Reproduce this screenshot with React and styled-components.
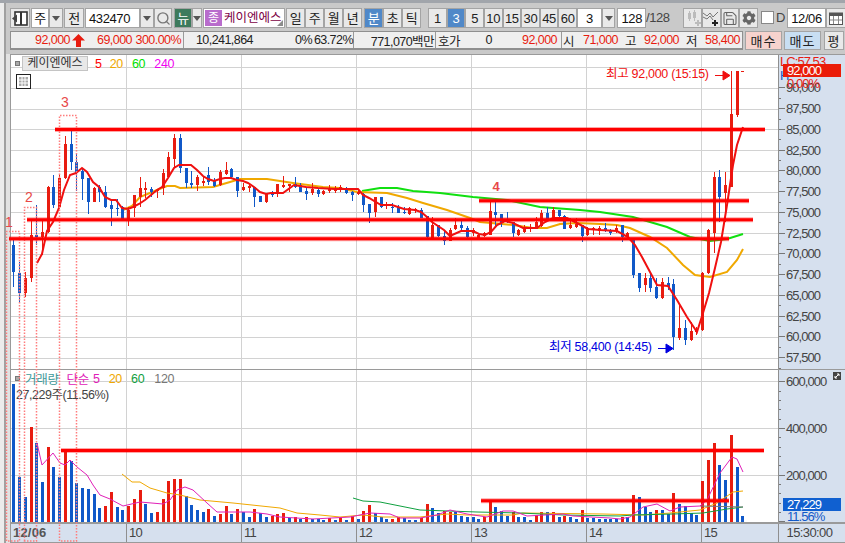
import React from 'react';
import styled, { createGlobalStyle } from 'styled-components';
import { Save, Search } from 'lucide-react';
import { FaCog } from 'react-icons/fa';

const GlobalStyle = createGlobalStyle`
  html, body { margin: 0; padding: 0; background: #c9c9c9; }
  body {
    font-family: "Liberation Sans", "Noto Sans CJK KR", sans-serif;
    font-size: 13px;
    color: #222;
  }
`;

const RED = '#e81c10';
const BLUE = '#1058c8';

// color, body top, body bottom, wick top, wick bottom (page y)
const candles = [
  ['b',245,272,239,287],['b',273,293,262,303],['r',278,293,272,297],['r',235,278,220,282],['b',235,237,205,245],
  ['r',232,237,220,255],['r',187,232,186,233],['b',187,205,175,208],['r',178,207,174,207],['r',144,178,136,179],
  ['b',144,162,130,170],['b',162,173,154,191],['b',171,179,168,200],['b',178,202,178,214],['r',188,202,187,202],
  ['b',187,192,185,202],['b',192,207,186,208],['b',205,209,199,226],['b',208,209,199,216],['b',207,219,206,219],
  ['r',210,221,207,226],['r',195,208,195,217],['r',188,197,177,207],['r',188,190,182,198],['b',189,192,187,197],
  ['r',190,191,189,198],['r',173,188,169,195],['r',157,177,152,177],['r',138,159,134,168],['b',138,168,134,173],
  ['b',168,183,168,188],['b',183,185,171,188],['r',177,185,175,191],['r',181,183,177,186],['b',175,182,167,185],
  ['b',180,186,178,187],['r',172,185,170,186],['r',170,174,162,175],['b',169,177,168,178],['b',177,191,177,197],
  ['r',187,190,183,191],['r',186,188,183,192],['b',187,197,187,207],['b',196,202,196,202],['r',193,202,193,203],
  ['b',193,195,191,197],['r',184,193,184,197],['r',185,187,176,188],['r',184,186,184,192],['b',184,187,177,188],
  ['b',185,192,183,192],['b',191,194,187,200],['r',189,193,183,195],['b',190,194,188,197],['r',191,194,190,195],
  ['r',189,191,185,193],['r',188,191,186,193],['r',187,190,185,192],['b',188,193,187,194],['b',192,195,191,201],
  ['r',192,194,189,195],['b',194,205,193,212],['b',204,213,204,223],['r',197,212,197,217],['b',197,207,197,208],
  ['r',205,206,202,209],['b',207,208,203,213],['b',207,213,205,213],['b',212,213,207,214],['r',208,214,207,215],
  ['r',209,211,208,213],['b',210,218,208,218],['b',216,237,216,238],['r',225,238,217,238],['b',225,236,225,237],
  ['b',236,241,230,245],['r',230,241,228,241],['r',225,229,218,230],['b',225,228,221,232],['b',228,237,226,238],
  ['r',230,233,228,236],['r',235,239,233,240],['r',233,236,232,237],['r',211,235,202,235],['b',212,215,202,227],
  ['b',214,223,214,227],['b',220,221,212,223],['b',222,233,222,237],['r',230,235,229,236],['r',228,232,225,233],
  ['r',227,229,224,232],['r',222,229,217,229],['r',213,226,210,227],['b',213,220,207,220],['r',210,220,207,220],
  ['b',210,216,210,218],['b',216,229,215,229],['r',225,228,218,229],['r',224,227,218,228],['b',225,236,225,242],
  ['r',228,235,227,236],['r',228,230,227,235],['r',228,231,226,235],['b',228,231,223,232],['b',230,233,229,235],
  ['r',228,231,225,233],['b',225,237,225,242],['r',233,237,232,240],['b',239,275,239,278],['b',273,288,273,292],
  ['r',278,285,273,292],['b',278,288,272,292],['b',287,298,278,299],['r',282,298,278,299],['b',283,287,277,290],
  ['b',284,337,279,350],['r',328,338,305,340],['b',328,340,320,345],['r',331,340,322,341],['r',330,332,327,335],
  ['r',273,330,272,331],['r',230,273,229,274],['r',177,233,172,253],['b',177,197,170,222],['r',185,193,172,222],
  ['r',114,187,71,187],['r',71,115,71,117],['r',71,72,71,72],
];

// top of each volume bar, negative = blue
const volumes = [
  -384,-477,-497,427,-443,-482,447,-467,-477,451,
  -461,-483,-488,-489,-494,-508,506,492,-507,-510,
  506,499,490,-504,-513,512,499,481,479,479,
  -496,-505,-510,-512,509,-516,514,506,-514,509,
  -512,-517,509,-513,-517,516,514,
  513,-518,517,-519,517,-519,-519,-520,518,-520,
  518,-520,516,-519,511,505,-513,-517,-519,519,
  517,-518,-520,-520,518,504,-508,-513,511,512,
  -512,-516,-517,-517,-519,517,502,-507,-511,-516,
  512,-517,-517,-520,515,512,-512,512,-517,516,
  -517,-519,510,-518,-518,-519,-519,
  -519,-519,517,-517,495,-497,-507,-512,510,-510,-514,
  493,-504,-506,-513,-515,481,460,443,-465,-480,435,-467,-516,
];

const ma5 = '37,263 42,254 47,231 53,222 59,208 64,190 70,175 76,173 82,168 87,172 93,182 99,187 105,197 111,200 116,200 122,208 128,209 133,207 139,204 145,200 151,195 157,190 162,187 168,178 174,168 179,165 185,165 191,165 197,170 203,176 208,179 214,181 220,179 225,178 231,178 237,180 243,181 248,183 254,187 260,192 266,194 271,193 283,193 294,185 306,187 318,188 335,189 358,189 363,195 369,198 381,205 392,205 404,209 415,210 421,212 427,217 432,222 444,230 450,236 461,231 473,231 479,234 485,235 491,232 497,225 505,221 513,223 523,228 537,228 545,222 553,218 567,218 577,223 588,229 600,230 617,231 628,237 635,245 642,257 650,272 657,285 668,286 677,300 687,317 697,332 703,313 709,293 715,268 721,242 727,205 733,165 737,145 743,127';
const ma20 = '123,210 132,206 140,197 157,190 167,186 175,186 180,188 213,187 230,182 240,179 267,179 280,181 293,183 323,187 340,188 357,192 387,193 407,198 423,203 447,210 470,218 480,222 513,225 533,228 547,228 560,224 577,223 600,224 617,225 630,228 650,237 667,248 683,265 695,275 710,277 727,272 737,260 743,249';
const ma60 = '362,191 380,188 397,188 413,191 440,193 473,197 507,200 540,207 580,210 600,212 633,217 667,227 690,237 710,241 727,239 743,234';

const volMa5 = '37,443 42,465 53,453 60,463 65,465 70,460 77,467 87,475 93,485 100,495 110,499 123,506 140,502 163,504 170,500 177,490 185,487 193,490 207,503 217,512 250,512 267,514 280,517 313,519 350,517 370,513 390,514 400,518 420,518 437,515 450,510 467,514 487,517 503,511 513,511 527,516 563,514 573,516 610,518 620,519 630,517 643,507 657,504 670,511 680,507 700,506 707,500 720,473 732,457 737,459 743,472';
const volMa20 = '122,474 132,482 140,482 150,488 167,493 180,495 200,500 233,503 280,508 297,513 320,515 340,517 363,515 383,517 420,517 447,514 467,515 513,515 523,513 603,514 643,515 670,513 700,510 717,503 733,492 743,491';
const volMa60 = '353,498 363,501 380,502 420,510 477,512 520,513 563,515 620,516 633,515 673,514 703,513 727,509 743,507';
const volMa120 = '700,506 743,507';

const priceTicks = [90000, 87500, 85000, 82500, 80000, 77500, 75000, 72500, 70000, 67500, 65000, 62500, 60000, 57500];
const priceY = (p) => 129.4 + (85000 - p) * 0.0083;
const barX = (i) => 13.3 + 5.74 * i;
const dayLines = [126.5, 241.5, 356.5, 471.5, 586.5, 701.5];
const fmt = (n) => n.toLocaleString('en-US');

const Page = styled.div`
  position: relative;
  width: 845px;
  height: 543px;
  display: flex;
  overflow: hidden;
  border-top: 3px solid #a1a5ab;
  box-sizing: border-box;
`;

const LeftRail = styled.div`
  width: 4px;
  flex: none;
  background: #ececec;
  border-right: 2px solid #a0a0a0;
`;

const Main = styled.div`
  flex: 1;
  min-width: 0;
  display: flex;
  flex-direction: column;
  padding: 5px 0 0 4px;
  background: #c9c9c9;
`;

const Toolbar = styled.div`
  display: flex;
  height: 20px;
`;

const Button = styled.div`
  box-sizing: border-box;
  flex: none;
  width: ${(p) => p.$w}px;
  margin-left: ${(p) => p.$ml || 0}px;
  height: 20px;
  display: flex;
  align-items: center;
  justify-content: center;
  background: ${(p) => (p.$active ? '#5088c8' : '#e9e9e9')};
  color: ${(p) => (p.$active ? '#fff' : '#222')};
  border: 1px solid #a4a4a4;
  font-size: 13px;
  letter-spacing: -0.4px;
  line-height: 1;
`;

const Field = styled(Button)`
  background: #fff;
  justify-content: ${(p) => p.$align || 'center'};
  padding: 0 3px;
  font-size: 13px;
  color: #111;
`;

const Badge = styled(Button)`
  background: #3d7a5c;
  color: #fff;
  border-color: #a4a4a4;
`;

const NameField = styled(Button)`
  position: relative;
  justify-content: flex-start;
  background: #fff;
  color: #7c0044;
  font-size: 12.5px;
  letter-spacing: 0;
  padding: 0;
  gap: 2px;
`;

const NameTag = styled.span`
  width: 17px;
  height: 16px;
  margin-left: 1px;
  background: #b86ccc;
  color: #fff;
  display: flex;
  align-items: center;
  justify-content: center;
  font-size: 12px;
`;

const Corner = styled.span`
  position: absolute;
  right: 1px;
  bottom: 1px;
  width: 0;
  height: 0;
  border-left: 6px solid transparent;
  border-bottom: 6px solid #8c8c8c;
`;

const Caret = styled.span`
  width: 0;
  height: 0;
  border-left: 4px solid transparent;
  border-right: 4px solid transparent;
  border-top: 5px solid #555;
`;

const PlainText = styled.span`
  flex: none;
  width: ${(p) => p.$w}px;
  margin-left: ${(p) => p.$ml || 0}px;
  height: 20px;
  line-height: 20px;
  color: #444;
  font-size: 13px;
  letter-spacing: -0.4px;
`;

const CheckBox = styled.span`
  flex: none;
  box-sizing: border-box;
  width: 13px;
  height: 13px;
  margin: 3px 0 0 3px;
  background: #fff;
  border: 1px solid #888;
`;

const InfoRow = styled.div`
  display: flex;
  height: 19px;
  margin-top: 3px;
`;

const InfoBar = styled.div`
  box-sizing: border-box;
  width: 733px;
  flex: none;
  display: flex;
  background: #efefef;
  border: 1px solid #8f8f8f;
  border-bottom-width: 2px;
`;

const InfoCell = styled.div`
  box-sizing: border-box;
  width: ${(p) => p.$w}px;
  flex: none;
  display: flex;
  align-items: center;
  padding-left: ${(p) => p.$pad || 0}px;
  border-right: ${(p) => (p.$last ? 'none' : '1px solid #9a9a9a')};
`;

const Value = styled.span`
  flex: none;
  width: ${(p) => p.$w}px;
  text-align: ${(p) => p.$align || 'right'};
  color: ${(p) => p.$color || '#222'};
  font-size: 12.5px;
  letter-spacing: -0.55px;
  white-space: nowrap;
`;

const UpArrow = styled.svg`
  flex: none;
  width: 13px;
  height: 13px;
  margin-left: 2px;
`;

const TradeButton = styled.div`
  box-sizing: border-box;
  flex: none;
  width: ${(p) => p.$w}px;
  margin-left: ${(p) => p.$ml}px;
  display: flex;
  align-items: center;
  justify-content: center;
  background: ${(p) => p.$bg};
  border: 1px solid #a4a4a4;
  font-size: 13px;
  letter-spacing: 1px;
  color: #222;
`;

const ChartFrame = styled.div`
  flex: 1;
  margin: 4px 0 0 -4px;
  padding-left: 4px;
  background: #e2e2e2;
  display: flex;
  flex-direction: column;
`;

const PanelRow = styled.div`
  position: relative;
  display: flex;
  height: ${(p) => p.$h}px;
  flex: none;
  border-top: 1px solid #9a9a9a;
  border-left: 1px solid #9a9a9a;
  background: #fff;
`;

const Plot = styled.svg`
  display: block;
  width: 767px;
  height: 100%;
  flex: none;
`;

const Axis = styled.svg`
  display: block;
  flex: none;
  width: 67px;
  height: 100%;
  background: #d6e0ee;
  border-left: 1px solid #8f8f8f;
  box-sizing: border-box;
`;

const AxisLabel = styled.text`
  font-size: 13px;
  letter-spacing: -0.95px;
  fill: ${(p) => p.$color || '#444'};
  dominant-baseline: central;
`;

const Note = styled.text`
  font-size: 12.5px;
  letter-spacing: -0.3px;
  fill: ${(p) => p.$color};
  dominant-baseline: central;
`;

const Legend = styled.div`
  position: absolute;
  left: 4px;
  top: ${(p) => p.$top}px;
  display: flex;
  align-items: center;
  height: 15px;
  font-size: 12.5px;
  letter-spacing: -0.3px;
  white-space: nowrap;
`;

const LegendDot = styled.span`
  width: 5px;
  height: 5px;
  background: #aaa;
  border: 1px solid #777;
  box-sizing: border-box;
  margin-right: ${(p) => p.$gap}px;
`;

const LegendName = styled.span`
  box-sizing: border-box;
  width: 66px;
  height: 15px;
  background: #e8e8e8;
  border: 1px solid #c4c4c4;
  color: #333;
  font-size: 12px;
  letter-spacing: 0;
  line-height: 13px;
  text-align: center;
`;

const LegendItem = styled.span`
  color: ${(p) => p.$color};
  margin-left: ${(p) => p.$ml}px;
`;

const VolumeInfo = styled.div`
  position: absolute;
  left: 5px;
  top: 14px;
  font-size: 12.5px;
  letter-spacing: -0.45px;
  color: #444;
`;

const TableIcon = styled.svg`
  position: absolute;
  left: 5px;
  top: 19px;
  width: 15px;
  height: 15px;
`;

const ExpandIcon = styled.svg`
  position: absolute;
  right: 4px;
  top: 2px;
  width: 8px;
  height: 8px;
`;

const TimeRow = styled.div`
  display: flex;
  height: 18px;
  flex: none;
  background: #d6e0ee;
  border-top: 2px solid #9a9a9a;
  border-left: 1px solid #9a9a9a;
  border-bottom: 1px solid #9a9a9a;
`;

const TimeCell = styled.div`
  box-sizing: border-box;
  flex: none;
  width: ${(p) => p.$w}px;
  padding-left: ${(p) => p.$pad || 2}px;
  border-right: 1px solid #8f8f8f;
  font-size: 13px;
  line-height: 18px;
  letter-spacing: ${(p) => (p.$bold ? '0.2px' : '-0.7px')};
  font-weight: ${(p) => (p.$bold ? 700 : 400)};
  color: ${(p) => (p.$bold ? '#555' : '#444')};
`;

const TimeEnd = styled(TimeCell)`
  flex: 1;
  border-right: none;
  padding-left: 8px;
  letter-spacing: -0.6px;
`;

const Annotations = styled.svg`
  position: absolute;
  left: 0;
  top: -3px;
  width: 845px;
  height: 543px;
  pointer-events: none;
`;

const StepLabel = styled.text`
  font-size: ${(p) => p.$size || 14}px;
  font-weight: ${(p) => p.$weight || 400};
  fill: #e84848;
  text-anchor: middle;
`;

const DropButton = ({ w }) => (
  <Button $w={w}>
    <Caret />
  </Button>
);

const PanelIcon = () => (
  <svg width="16" height="15" viewBox="0 0 16 15">
    <rect x="3" y="1" width="12" height="13" fill="#fff" stroke="#333" strokeWidth="1.6" />
    <rect x="8" y="1" width="2" height="13" fill="#333" />
    <path d="M0 7.5 L5 3.5 V11.5 Z" fill="#444" />
  </svg>
);

const CandleAddIcon = () => (
  <svg width="16" height="16" viewBox="0 0 16 16" fill="#bcbcbc">
    <rect x="3" y="3" width="3" height="6" />
    <rect x="4" y="1" width="1" height="10" />
    <rect x="8" y="2" width="3" height="6" />
    <rect x="9" y="0" width="1" height="11" />
    <path d="M12 10h2v2h2v2h-2v2h-2v-2h-2v-2h2z" />
  </svg>
);

const LineAddIcon = () => (
  <svg width="17" height="16" viewBox="0 0 17 16">
    <path d="M0 3 L4 6 L7 3 L10 7 L15 2 M0 7 L4 9 L7 6 L10 10" fill="none" stroke="#777" strokeWidth="1" />
    <path d="M11 10h2v2h2v2h-2v2h-2v-2h-2v-2h2z" fill="#222" />
  </svg>
);

const CalendarIcon = () => (
  <svg width="14" height="13" viewBox="0 0 14 13">
    <rect x="0.5" y="1" width="13" height="11.5" fill="#fff" stroke="#555" />
    <rect x="0.5" y="1" width="13" height="3" fill="#555" />
    <path d="M4.5 4v8M9.5 4v8M1 8h12" stroke="#888" />
  </svg>
);

const Candles = () => (
  <g shapeRendering="crispEdges">
    {candles.map(([c, top, bot, wt, wb], i) => {
      const x = Math.round(barX(i));
      const fill = c === 'r' ? RED : BLUE;
      return (
        <g key={i} fill={fill}>
          <rect x={x} y={wt} width="1" height={wb - wt} />
          <rect x={x - 1} y={top} width="3" height={Math.max(bot - top, 1)} />
        </g>
      );
    })}
  </g>
);

const VolumeBars = () => (
  <g shapeRendering="crispEdges">
    {volumes.map((v, i) => {
      const top = Math.abs(v);
      return (
        <rect key={i} x={Math.round(barX(i)) - 1} y={top} width="3" height={522 - top} fill={v < 0 ? BLUE : RED} />
      );
    })}
  </g>
);

const Trend = ({ pts, color, w }) => <polyline points={pts} fill="none" stroke={color} strokeWidth={w} />;

const GridLines = ({ ys, y1, y2 }) => (
  <g stroke="#d2d2d2" strokeWidth="1" shapeRendering="crispEdges">
    {ys.map((y) => <line key={y} x1="11" x2="778" y1={y} y2={y} />)}
    {dayLines.map((x) => <line key={x} x1={x} x2={x} y1={y1} y2={y2} />)}
  </g>
);

const PriceAxis = () => (
  <Axis viewBox="779 55 66 314">
    <g stroke="#777" shapeRendering="crispEdges">
      {priceTicks.map((p) => (
        <g key={p}>
          <line x1="778" x2="785" y1={priceY(p)} y2={priceY(p)} />
          <line x1="778" x2="781" y1={priceY(p) + 10.4} y2={priceY(p) + 10.4} />
        </g>
      ))}
    </g>
    {priceTicks.map((p) => <AxisLabel key={p} x="786" y={priceY(p)}>{fmt(p)}</AxisLabel>)}
    <AxisLabel x="780" y="61" $color="#e81c10">LC:57.53</AxisLabel>
    <AxisLabel x="780" y="75" $color="#1058c8">H</AxisLabel>
    <rect x="783" y="64" width="58" height="13" fill="#ea1c08" />
    <AxisLabel x="787" y="70.5" $color="#fff">92,000</AxisLabel>
    <AxisLabel x="787" y="83" $color="#e81c10">0.00%</AxisLabel>
  </Axis>
);

const VolumeAxis = () => (
  <Axis viewBox="779 370 66 152">
    <g stroke="#777" shapeRendering="crispEdges">
      {[0, 1, 2, 3, 4, 5, 6, 7, 8, 9, 10, 11, 12, 13, 14, 15].map((k) => {
        const y = 521.7 - k * 9.33;
        return <line key={k} x1="778" x2={k % 5 === 0 ? 785 : 781} y1={y} y2={y} />;
      })}
    </g>
    {[600000, 400000, 200000].map((v) => (
      <AxisLabel key={v} x="786" y={521.7 - v * 0.00023333}>{fmt(v)}</AxisLabel>
    ))}
    <rect x="783" y="498" width="58" height="13" fill="#1060d0" />
    <AxisLabel x="787" y="504.5" $color="#fff">27,229</AxisLabel>
    <AxisLabel x="787" y="516.5" $color="#1058c8">11.56%</AxisLabel>
  </Axis>
);

export default function App() {
  return (
    <>
      <GlobalStyle />
      <Page>
        <LeftRail />
        <Main>
          <Toolbar>
            <Button $w={20}><PanelIcon /></Button>
            <Field $w={18} $ml={1}>주</Field>
            <DropButton w={14} />
            <Button $w={20} $ml={1}>전</Button>
            <Field $w={55} $ml={1} $align="flex-start">432470</Field>
            <DropButton w={14} />
            <Button $w={18}><Search size={15} color="#777" strokeWidth={2.2} /></Button>
            <Badge $w={18} $ml={2}>뉴</Badge>
            <Button $w={10}><Caret /></Button>
            <NameField $w={82} $ml={1}>
              <NameTag>종</NameTag>
              케이엔에스
              <Corner />
            </NameField>
            {['일', '주', '월', '년'].map((t, i) => <Button key={t} $w={19} $ml={i === 0 ? 1 : 0}>{t}</Button>)}
            <Button $w={19} $ml={2} $active>분</Button>
            <Button $w={19}>초</Button>
            <Button $w={19}>틱</Button>
            {['1', '3', '5', '10', '15', '30', '45', '60'].map((t, i) => (
              <Button key={t} $w={18.625} $ml={i === 0 ? 7 : 0} $active={t === '3'}>{t}</Button>
            ))}
            <Field $w={25}>3</Field>
            <DropButton w={13} />
            <Field $w={29} $ml={2} $align="flex-end">128</Field>
            <PlainText $w={26}>/128</PlainText>
            <Button $w={19} $ml={11}><CandleAddIcon /></Button>
            <Button $w={19}><LineAddIcon /></Button>
            <Button $w={18}><Save size={17} color="#666" strokeWidth={1.6} /></Button>
            <Button $w={19}><FaCog size={14} color="#666" /></Button>
            <CheckBox />
            <PlainText $w={11} $ml={2}>D</PlainText>
            <Field $w={39}>12/06</Field>
            <Button $w={20}><CalendarIcon /></Button>
          </Toolbar>

          <InfoRow>
            <InfoBar>
              <InfoCell $w={173}>
                <Value $w={59} $color={RED}>92,000</Value>
                <UpArrow viewBox="0 0 13 13"><path d="M6.5 0 L13 6.5 H9 V13 H4 V6.5 H0 Z" fill={RED} /></UpArrow>
                <Value $w={47} $color={RED}>69,000</Value>
                <Value $w={49} $color={RED}>300.00%</Value>
              </InfoCell>
              <InfoCell $w={170}>
                <Value $w={69}>10,241,864</Value>
                <Value $w={59}>0%</Value>
                <Value $w={41}>63.72%</Value>
              </InfoCell>
              <InfoCell $w={82}>
                <Value $w={80}>771,070백만</Value>
              </InfoCell>
              <InfoCell $w={126} $pad={2}>
                <Value $w={22} $align="left">호가</Value>
                <Value $w={32}>0</Value>
                <Value $w={65} $color={RED}>92,000</Value>
              </InfoCell>
              <InfoCell $w={181} $pad={1} $last>
                <Value $w={11} $align="left">시</Value>
                <Value $w={44} $color={RED}>71,000</Value>
                <Value $w={18}>고</Value>
                <Value $w={43} $color={RED}>92,000</Value>
                <Value $w={18}>저</Value>
                <Value $w={43} $color={RED}>58,400</Value>
              </InfoCell>
            </InfoBar>
            <TradeButton $w={37} $ml={2} $bg="#f6d2cd">매수</TradeButton>
            <TradeButton $w={37} $ml={2} $bg="#c8def2">매도</TradeButton>
            <TradeButton $w={20} $ml={3} $bg="#e9e9e9">평</TradeButton>
          </InfoRow>

          <ChartFrame>
            <PanelRow $h={314}>
              <Plot viewBox="11 55 767 314">
                <GridLines ys={[92500, ...priceTicks].map((p) => Math.round(priceY(p)) + 0.5)} y1={55} y2={369} />
                <Trend pts={ma60} color="#10e010" w={2} />
                <Trend pts={ma20} color="#f0a800" w={2} />
                <Candles />
                <Trend pts={ma5} color="#f01010" w={2} />
                <Note x="606" y="74" $color="#f01010">최고 92,000 (15:15)</Note>
                <path d="M715 75.5 H724 M723 71 L730 75.5 L723 80 Z" fill="#f01010" stroke="#f01010" />
                <Note x="549" y="347" $color="#0000e0">최저 58,400 (14:45)</Note>
                <path d="M658 348.5 H667 M666 344 L673 348.5 L666 353 Z" fill="#0000e0" stroke="#0000e0" />
              </Plot>
              <PriceAxis />
              <Legend $top={1}>
                <LegendDot $gap={2} />
                <LegendName>케이엔에스</LegendName>
                <LegendItem $color="#ff0000" $ml={7}>5</LegendItem>
                <LegendItem $color="#f0a800" $ml={8}>20</LegendItem>
                <LegendItem $color="#00e000" $ml={9}>60</LegendItem>
                <LegendItem $color="#f000f0" $ml={9}>240</LegendItem>
              </Legend>
              <TableIcon viewBox="0 0 15 15">
                <rect x="0.5" y="0.5" width="14" height="14" fill="#fff" stroke="#222" />
                <rect x="3" y="3" width="9" height="9" fill="#aaa" />
                <path d="M6 3v9M9 3v9M3 6h9M3 9h9" stroke="#fff" />
              </TableIcon>
            </PanelRow>

            <PanelRow $h={152}>
              <Plot viewBox="11 370 767 152">
                <GridLines ys={[381.5, 428.5, 475.5]} y1={370} y2={522} />
                <VolumeBars />
                <Trend pts={volMa20} color="#f0a800" w={1} />
                <Trend pts={volMa60} color="#10a040" w={1} />
                <Trend pts={volMa120} color="#777" w={1} />
                <Trend pts={volMa5} color="#e020b8" w={1} />
              </Plot>
              <VolumeAxis />
              <Legend $top={1}>
                <LegendDot $gap={5} />
                <LegendItem $color="#3f9a9a" $ml={0}>거래량</LegendItem>
                <LegendItem $color="#e020b8" $ml={8}>단순</LegendItem>
                <LegendItem $color="#e020b8" $ml={4}>5</LegendItem>
                <LegendItem $color="#f0a800" $ml={9}>20</LegendItem>
                <LegendItem $color="#10a040" $ml={9}>60</LegendItem>
                <LegendItem $color="#777" $ml={10}>120</LegendItem>
              </Legend>
              <VolumeInfo>27,229주(11.56%)</VolumeInfo>
              <ExpandIcon viewBox="0 0 8 8">
                <rect width="8" height="8" fill="#444" />
                <path d="M2 6 L6 2 M4 2h2v2M2 4v2h2" stroke="#fff" fill="none" />
              </ExpandIcon>
            </PanelRow>

            <TimeRow>
              <TimeCell $w={116} $bold>12/06</TimeCell>
              {['10', '11', '12', '13', '14'].map((d) => <TimeCell key={d} $w={115}>{d}</TimeCell>)}
              <TimeCell $w={76.5}>15</TimeCell>
              <TimeEnd>15:30:00</TimeEnd>
            </TimeRow>
          </ChartFrame>
        </Main>

        <Annotations viewBox="0 0 845 543">
          <g fill="none" stroke="#ff7c7c" strokeWidth="1.5" strokeDasharray="1.5 1.5">
            <path d="M6.5 541 V231.5 H19.5 V541 Z" />
            <path d="M24.5 541 V207.5 H36.5 V541 Z" />
            <path d="M59.5 541 V115.5 H76.5 V541 Z" />
          </g>
          <StepLabel x="9" y="227">1</StepLabel>
          <StepLabel x="29" y="202">2</StepLabel>
          <StepLabel x="65" y="107">3</StepLabel>
          <StepLabel x="496" y="191" $size={13} $weight={700}>4</StepLabel>
          {[
            [55, 765, 129.5], [27, 753, 219.8], [9, 729, 238.8], [479, 749, 200.7],
            [61, 764, 450.5], [481, 729, 500.7],
          ].map(([x1, x2, y]) => (
            <g key={y}>
              <line x1={x1} x2={x2} y1={y} y2={y} stroke="#ff0000" strokeOpacity="0.35" strokeWidth="5" />
              <line x1={x1} x2={x2} y1={y} y2={y} stroke="#ff0000" strokeWidth="3" />
            </g>
          ))}
        </Annotations>
      </Page>
    </>
  );
}
